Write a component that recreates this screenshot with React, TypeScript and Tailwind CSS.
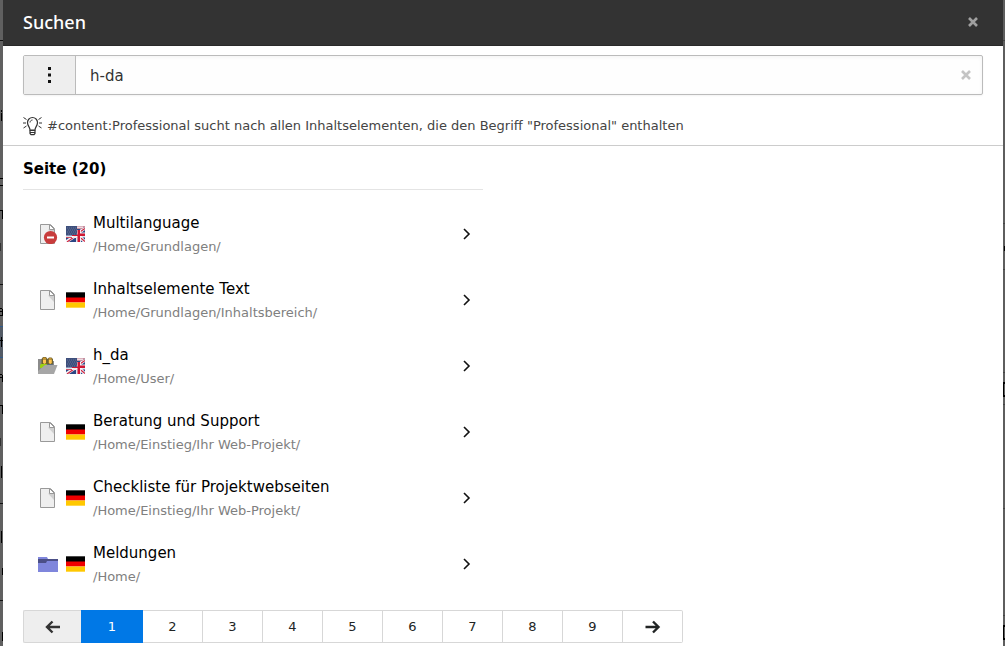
import { useState } from 'react';

type PageKind = 'page' | 'hidden' | 'users' | 'folder';
type Result = { title: string; path: string; kind: PageKind; lang: 'de' | 'en' };

const results: Result[] = [
  { title: 'Multilanguage', path: '/Home/Grundlagen/', kind: 'hidden', lang: 'en' },
  { title: 'Inhaltselemente Text', path: '/Home/Grundlagen/Inhaltsbereich/', kind: 'page', lang: 'de' },
  { title: 'h_da', path: '/Home/User/', kind: 'users', lang: 'en' },
  { title: 'Beratung und Support', path: '/Home/Einstieg/Ihr Web-Projekt/', kind: 'page', lang: 'de' },
  { title: 'Checkliste für Projektwebseiten', path: '/Home/Einstieg/Ihr Web-Projekt/', kind: 'page', lang: 'de' },
  { title: 'Meldungen', path: '/Home/', kind: 'folder', lang: 'de' },
];

const pages = [1, 2, 3, 4, 5, 6, 7, 8, 9];

function PageIcon({ kind }: { kind: PageKind }) {
  if (kind === 'folder') {
    return (
      <svg className="w-5 h-5" viewBox="0 0 20 20" aria-hidden="true">
        <path d="M0 3h9l1 2h10v13H0z" fill="#7f86dc" />
        <path d="M0 5h20v2H9l-1 2H0z" fill="#4b4f87" />
      </svg>
    );
  }
  if (kind === 'users') {
    return (
      <svg className="w-5 h-5" viewBox="0 0 20 20" aria-hidden="true">
        <path d="M0 3h6l1 2h9v4L3 18H0z" fill="#8b8b8b" />
        <path d="M2 12V9l2-2h5v5z" fill="#9bd013" />
        <path d="M8.500 12V9l2-2h3l2 2v3z" fill="#5f6b75" />
        <path d="M3.500 8V3l1.500-2h3l1.500 2v5zM9.500 8V3L11 1.500h2.500L15 3v5z" fill="#6f6230" />
        <path d="M5 3.500h3V7l-1.500 1L5 7zM10.800 3.500h3V7l-1.500 1-1.500-1z" fill="#ffc54d" />
        <path d="M4.500 3l1-1.500h2l1 1.500zM10.500 3l1-1h1.500l1 1z" fill="#c9952b" />
        <path d="M3.500 12 7 9h12.500L16 18H0v-3z" fill="#a6a6a6" />
      </svg>
    );
  }
  return (
    <svg className="w-5 h-5" viewBox="0 0 20 20" aria-hidden="true">
      <path d="M2.500.5h10l4 4v15h-14z" fill="#efefef" stroke="#999" />
      <path d="M10 5.500h6V12z" fill="#d0d0d0" />
      <path d="M11.500.5v5h5z" fill="#fff" stroke="#999" />
      {kind === 'hidden' && (
        <>
          <circle cx="12.500" cy="13.500" r="6.600" fill="#c83c3c" />
          <path d="M9 12.500h7v2H9z" fill="#fff" />
        </>
      )}
    </svg>
  );
}

function Flag({ lang }: { lang: 'de' | 'en' }) {
  if (lang === 'de') {
    return (
      <svg className="w-[19px] h-4" viewBox="0 0 19 16" role="img" aria-label="Deutsch">
        <path d="M0 0h19v6H0z" fill="#000" />
        <path d="M0 5.500h19v5H0z" fill="#f00000" />
        <path d="M0 10.500h19V16H0z" fill="#ffc800" />
        <path d="M0 0h19v1H0zM0 15h19v1H0z" fill="#fff" opacity=".3" />
      </svg>
    );
  }
  // US canton over the Union Jack
  return (
    <svg className="w-[19px] h-4" viewBox="0 0 19 16" role="img" aria-label="English">
      <path d="M0 0h19v16H0z" fill="#2b4583" />
      <path d="M0 16 12 8M19 16 12 9M11 8l8-6" stroke="#f4f1f5" strokeWidth="3.200" />
      <path d="M1 16l10-7M19 15.500 13 10.500M13 6.500l6-4" stroke="#cf2540" strokeWidth="1.200" />
      <path d="M0 9h19v-2.500h-4V4h-4v5.500H0V12h10v4h5v-4.500h4V6.500z" fill="#fff" opacity=".85" />
      <path d="M11.500 4h2.500v3.500h5V10h-5v6h-2.500v-6H6V8.500h5.500z" fill="#cf1733" />
      <path d="M0 11h6v1H0z" fill="#cf5065" />
      <path d="M11 0h8v1l-3 2h-5z" fill="#c88f9f" />
      <path d="M11 1.200h6" stroke="#fff" />
      <path d="M0 0h11v9H0z" fill="#3d4f7c" />
      <path d="M1 2h9M2 4h9M1 6h9M2 8h9" stroke="#6d7b9f" strokeWidth=".8" strokeDasharray="1 1" />
    </svg>
  );
}

function BulbIcon() {
  return (
    <svg className="w-5 h-5 shrink-0" viewBox="0 0 20 20" fill="none" stroke="#333" aria-hidden="true">
      <path d="M7 14c0-3-2.500-3.800-2.500-7.500a5 5 0 0 1 10 0C14.500 10.200 12 11 12 14z" strokeWidth="1.200" />
      <path d="M7 14.500h5v3l-1 1.200H8l-1-1.200zM7 16.500h5" strokeWidth="1.200" />
      <path d="M7 6.500c.2-1.500 1-2.300 2.500-2.500" />
      <path d="M.5 1.500l3 2M0 7h3M.5 12l3-2M18.500 1.500l-3 2M19 7h-3M18.500 12l-3-2" />
    </svg>
  );
}

function CloseIcon() {
  return (
    <svg className="w-[10px] h-[10px]" viewBox="0 0 10 10" aria-hidden="true">
      <path d="M1 1l8 8M9 1L1 9" stroke="currentColor" strokeWidth="2.600" />
    </svg>
  );
}

function ArrowIcon({ back = false }: { back?: boolean }) {
  return (
    <svg className="w-4 h-[14px]" viewBox="0 0 16 14" fill="none" stroke="currentColor" strokeWidth="2.400" aria-hidden="true">
      <path d={back ? 'M15 7H2M7.500 1.500 2 7l5.500 5.500' : 'M.5 7H14M8 1.500 13.500 7 8 12.500'} />
    </svg>
  );
}

// slivers of the dimmed backend that stay visible next to the modal
function LeftEdge() {
  return (
    <svg className="w-[3px] shrink-0 self-stretch bg-[#606060]" aria-hidden="true">
      <path d="M0 40.500h3M0 284.500h3M0 503.500h3M0 600.500h3" stroke="#111" />
      <path d="M0 327h3v30H0z" fill="#535b66" />
      <path d="M0 326.500h3M0 357.500h3" stroke="#2d5a8c" />
      <path d="M1 110h1v2H1zM1 113h1v8H1zM0 178h3v1H0zM0 185h3v1H0zM0 210h3v1H0zM2 210h1v9H2zM0 308h2v1H0zM2 309h1v7H2zM0 311h2v1H0zM0 315h2v1H0zM0 340h3v1H0zM1 337h1v10H1zM0 374h2v1H0zM2 375h1v7H2zM0 377h2v1H0zM0 405h3v1H0zM2 405h1v9H2zM1 466h1v12H1zM1 531h1v12H1zM2 568h1v7H2zM2 632h1v9H2z" fill="#000" />
      <path d="M0 243h1v8H0zM0 438h1v8H0z" fill="#333" />
    </svg>
  );
}

function RightEdge() {
  return (
    <svg className="w-[2px] shrink-0 self-stretch bg-[#5e5e5e]" aria-hidden="true">
      <path d="M0 40.500h2M0 223.500h2M0 269.500h2M0 372.500h2M0 404.500h2M0 508.500h2M0 615.500h2" stroke="#444" />
      <path d="M1 246h1v5H1zM0 382h2v2H0zM0 395h2v2H0zM0 382h1v15H0zM0 625h2v2H0zM0 638h2v2H0zM0 625h1v15H0z" fill="#000" />
    </svg>
  );
}

export default function App() {
  const [query, setQuery] = useState('h-da');
  const [page, setPage] = useState(1);

  return (
    <div className="flex min-h-screen font-['DejaVu_Sans',sans-serif] text-[13px] text-black">
      <LeftEdge />
      <div role="dialog" aria-labelledby="modal-title" className="flex-1 min-w-0 bg-white">
        <header className="flex items-center justify-between h-[46px] px-5 pb-[2px] bg-[#333] border-b border-[#292929]">
          <h1 id="modal-title" className="font-['Noto_Sans',sans-serif] text-lg leading-6 font-medium text-white">Suchen</h1>
          <button type="button" aria-label="Schließen" className="px-[5px] text-[#a0a0a0]">
            <CloseIcon />
          </button>
        </header>

        <form className="border-b border-[#ccc] px-5 pt-[9px] pb-[9px]" onSubmit={(e) => e.preventDefault()}>
          <div className="flex h-10 border border-[#bbb] rounded-xs bg-[#fefefe] shadow-[inset_0_1px_4px_#0000000d,0_1px_2px_#0000000d]">
            <button type="button" aria-label="Optionen" className="flex items-center justify-center w-[52px] pr-[2px] bg-[#eee] border-r border-[#bbb]">
              <svg className="w-4 h-4" viewBox="0 0 16 16" aria-hidden="true">
                <path d="M7 0h3v3H7zM7 6.500h3v3H7zM7 13h3v3H7z" fill="#111" />
              </svg>
            </button>
            <input
              type="text"
              aria-label="Suchbegriff"
              className="flex-1 min-w-0 px-[14px] pt-[2px] text-[15px] text-[#333] bg-transparent outline-none"
              value={query}
              onChange={(e) => setQuery(e.target.value)}
            />
            <button type="button" aria-label="Leeren" className="pl-3 pr-[11px] text-[#c4c4c4]" onClick={() => setQuery('')}>
              <CloseIcon />
            </button>
          </div>
          <p className="flex items-center gap-1 mt-[21px] leading-5 text-[#444]">
            <BulbIcon />
            #content:Professional sucht nach allen Inhaltselementen, die den Begriff "Professional" enthalten
          </p>
        </form>

        <main className="px-5 pb-[3px]">
          <section className="w-1/2 pr-5">
            <h2 className="h-11 pt-3 text-[15px] leading-[22px] font-bold border-b border-[#e4e4e4]">Seite (20)</h2>
            <ul className="pt-[11px]">
              {results.map((item) => (
                <li key={item.title}>
                  <a href="#" className="flex items-center h-[66px] pl-[15px] pr-[11px]">
                    <PageIcon kind={item.kind} />
                    <span className="mx-2 shrink-0"><Flag lang={item.lang} /></span>
                    <span className="flex-1 min-w-0 pt-[2px]">
                      <span className="block text-[15px] leading-6">{item.title}</span>
                      <span className="block leading-6 text-[#808080]">{item.path}</span>
                    </span>
                    <svg className="w-[10px] h-3" viewBox="0 0 10 12" fill="none" stroke="#111" strokeWidth="1.600" aria-hidden="true">
                      <path d="M2 1l5 5-5 5" />
                    </svg>
                  </a>
                </li>
              ))}
            </ul>
          </section>

          <nav aria-label="Seiten" className="flex mt-[13px] h-[33px]">
            <button
              type="button"
              aria-label="Zurück"
              disabled={page === 1}
              className="flex items-center justify-center w-[58px] border border-r-0 border-[#d7d7d7] rounded-l-xs disabled:bg-[#eee] text-[#333]"
              onClick={() => setPage(page - 1)}
            >
              <ArrowIcon back />
            </button>
            {pages.map((n) => (
              <button
                key={n}
                type="button"
                aria-current={n === page ? 'page' : undefined}
                className={n === page
                  ? 'w-[62px] bg-[#0078e6] text-white'
                  : 'w-[60px] border-y border-r border-[#d7d7d7] text-[#212424]'}
                onClick={() => setPage(n)}
              >
                {n}
              </button>
            ))}
            <button
              type="button"
              aria-label="Weiter"
              className="flex items-center justify-center w-[60px] border border-l-0 border-[#d7d7d7] rounded-r-xs text-[#212424]"
              onClick={() => setPage(Math.min(page + 1, 9))}
            >
              <ArrowIcon />
            </button>
          </nav>
        </main>
      </div>
      <RightEdge />
    </div>
  );
}
